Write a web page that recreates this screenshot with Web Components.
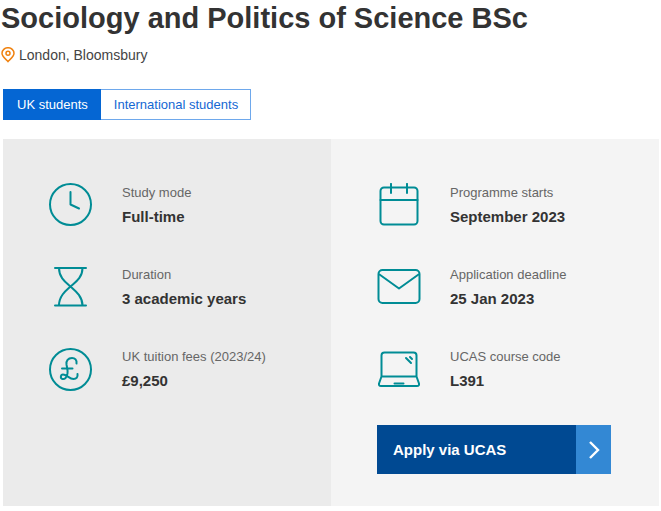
<!DOCTYPE html>
<html lang="en">
<head>
<meta charset="utf-8">
<meta name="viewport" content="width=device-width, initial-scale=1">
<title>Sociology and Politics of Science BSc</title>
<style>
  body { margin: 0; background: #fff; color: #333; font-family: "Liberation Sans", Arial, sans-serif; }
</style>
</head>
<body>
<course-page></course-page>

<script>
const icons = {
  clock: '<circle cx="21.500" cy="21.500" r="20.500"/><path d="M21.500 9V21.500l8.500 4"/>',
  hourglass: '<path d="M6 3h31M6 40.500h31M10 3C10 13 17 17.500 21.500 21.500S33.500 31 33.500 40.500M33.500 3C33.500 13 26 17.500 21.500 21.500S10 31 10 40.500"/>',
  pound: '<circle cx="21.500" cy="22.500" r="20.500"/><path d="M27.500 16.500c.5-3.500-1.500-5.500-4.500-5.500-4 0-6 3-5.500 6.500.5 3 1.500 6 1 9-.5 4-3 6-5 5.500-2.500-.5-2-4.500.5-4.500 3.500 0 6.500 4.500 10.500 4.500 3 0 4.500-2 4-5M13 21.500h10.500"/>',
  calendar: '<rect x="3.500" y="4.500" width="37" height="37" rx="3.500"/><path d="M3.500 17h37M14 .9v9M30 .9v9"/>',
  envelope: '<rect x="1.500" y="5" width="41" height="33" rx="4"/><path d="M2.500 9.500L22 23.500 41.500 9.500"/>',
  laptop: '<path d="M4.500 29.500V8.500a3 3 0 0 1 3-3h29a3 3 0 0 1 3 3v21M4.500 29.500h35l2.500 7q.5 2.500-2 2.500h-36q-2.500 0-2-2.500zM17.500 36.500h9M29 11l5 5M33 10l2 2"/>'
};

function define(name, markup, setup) {
  const template = document.createElement('template');
  template.innerHTML = markup;
  customElements.define(name, class extends HTMLElement {
    constructor() {
      super();
      this.attachShadow({ mode: 'open' }).append(template.content.cloneNode(true));
    }
    connectedCallback() {
      if (setup) setup(this, this.shadowRoot);
    }
  });
}

define('fact-icon', `
  <style>
    :host { display: block; width: 44px; height: 44px; }
    svg { display: block; fill: none; stroke: #008c95; stroke-width: 2; stroke-linecap: round; stroke-linejoin: round; }
  </style>
  <svg width="44" height="44" viewBox="0 0 44 44" aria-hidden="true"></svg>
`, (host, root) => {
  root.querySelector('svg').innerHTML = icons[host.getAttribute('name')] || '';
});

define('key-fact', `
  <style>
    :host { display: flex; align-items: center; gap: 29px; padding-top: 2px; }
    .icon { flex: none; }
    dl { margin: 0; min-width: 0; }
    dt { font-size: 13px; line-height: 24px; color: #666; }
    dd { margin: 0; font-size: 15px; line-height: 24px; font-weight: bold; color: #333; }
  </style>
  <div class="icon"></div>
  <dl><dt><slot name="label"></slot></dt><dd><slot></slot></dd></dl>
`, (host, root) => {
  root.querySelector('.icon').innerHTML = `<fact-icon name="${host.getAttribute('icon')}"></fact-icon>`;
});

define('fact-column', `
  <style>
    :host { display: flex; flex-direction: column; gap: 32px; padding: 40px 46px 32px; box-sizing: border-box; min-width: 0; }
  </style>
  <slot></slot>
`);

define('course-location', `
  <style>
    :host { display: flex; align-items: center; gap: 4px; font-size: 14px; line-height: 20px; color: #444; }
    svg { flex: none; fill: none; stroke: #f0820f; stroke-width: 1.500; }
  </style>
  <svg width="14" height="16" viewBox="0 0 14 16" aria-hidden="true">
    <path d="M7 14.500C5.500 12.500 1 10 1 6.300a6 5.600 0 0 1 12 0C13 10 8.500 12.500 7 14.500z"/><circle cx="7" cy="6.300" r="2"/>
  </svg>
  <span><slot></slot></span>
`);

define('student-tabs', `
  <style>
    :host { display: flex; }
    button { box-sizing: border-box; margin: 0; padding: 0 12px 0 13px; border: 1px solid #6ea8ec; border-left: 0; border-radius: 0;
      font: inherit; font-size: 13px; line-height: 29px; color: #1467d3; background: #fff; cursor: pointer; }
    button:first-child, button:first-of-type { border-left: 1px solid #0566d3; }
    button[aria-pressed="true"] { border-color: #0566d3; color: #fff; background: #0566d3; }
  </style>
  <button type="button" aria-pressed="true">UK students</button>
  <button type="button" aria-pressed="false">International students</button>
`, (host, root) => {
  const buttons = root.querySelectorAll('button');
  buttons.forEach(b => b.onclick = () => buttons.forEach(o => o.setAttribute('aria-pressed', o === b)));
});

define('apply-link', `
  <style>
    :host { display: block; }
    a { display: flex; max-width: 234px; min-height: 49px; color: #fff; background: #004992; font-size: 15px; line-height: 24px; font-weight: bold; text-decoration: none; }
    .text { flex: 1; align-self: center; padding: 0 16px; }
    .arrow { flex: none; width: 35px; display: grid; place-items: center; background: #3388d4; }
    svg { fill: none; stroke: #fff; stroke-width: 2.400; }
  </style>
  <a href="#apply">
    <span class="text"><slot></slot></span>
    <span class="arrow"><svg width="12" height="18" viewBox="0 0 12 18" aria-hidden="true"><path d="M2 1l8 8-8 8"/></svg></span>
  </a>
`);

define('course-page', `
  <style>
    :host { display: block; padding: 0 2px 5px 3px; }
    h1 { margin: 0 0 9px -2px; font-size: 29px; line-height: 36px; font-weight: bold; color: #333; }
    course-location { margin: 0 0 24px -2px; }
    .facts { margin-top: 19px; display: grid; grid-template-columns: 1fr 1fr; background: #f4f4f4; }
    .first { background: #ebebeb; }
  </style>
  <h1>Sociology and Politics of Science BSc</h1>
  <course-location>London, Bloomsbury</course-location>
  <student-tabs></student-tabs>
  <section class="facts" aria-label="Key information">
    <fact-column class="first">
      <key-fact icon="clock"><span slot="label">Study mode</span>Full-time</key-fact>
      <key-fact icon="hourglass"><span slot="label">Duration</span>3 academic years</key-fact>
      <key-fact icon="pound"><span slot="label">UK tuition fees (2023/24)</span>£9,250</key-fact>
    </fact-column>
    <fact-column>
      <key-fact icon="calendar"><span slot="label">Programme starts</span>September 2023</key-fact>
      <key-fact icon="envelope"><span slot="label">Application deadline</span>25 Jan 2023</key-fact>
      <key-fact icon="laptop"><span slot="label">UCAS course code</span>L391</key-fact>
      <apply-link>Apply via UCAS</apply-link>
    </fact-column>
  </section>
`);
</script>
</body>
</html>
